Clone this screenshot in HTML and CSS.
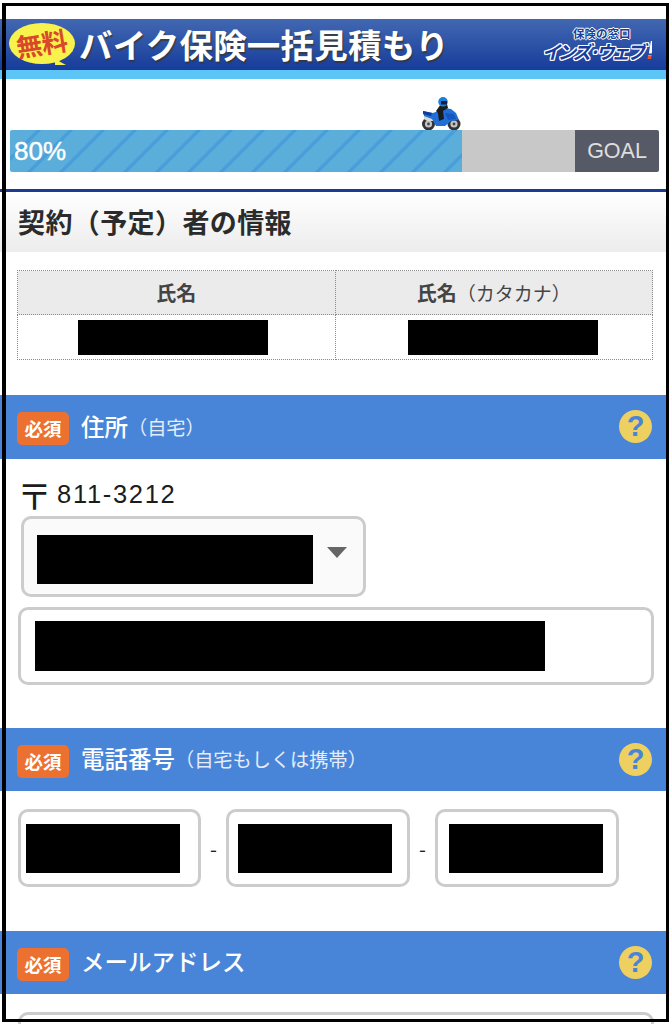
FILE: index.html
```html
<!DOCTYPE html>
<html lang="ja">
<head>
    <meta charset="UTF-8">
    <meta name="viewport" content="width=device-width, initial-scale=1.0">
    <title>バイク保険一括見積もり</title>
    <link rel="stylesheet" href="styles.css">
</head>
<body>
    <div class="page">
        <!-- Header -->
        <header class="site-header">
            <div class="free-bubble"><span>無料</span></div>
            <h1>バイク保険一括見積もり</h1>
            <div class="logo">
                <div class="logo-sub">保険の窓口</div>
                <div class="logo-main">インズ·ウェブ<span class="logo-mark">!</span></div>
            </div>
        </header>

        <!-- Progress -->
        <div class="progress">
            <div class="progress-bar">
                <div class="progress-fill">80%</div>
                <div class="progress-rest"></div>
                <div class="progress-goal">GOAL</div>
                <svg class="bike" width="40" height="33" viewBox="0 0 40 33">
                    <circle cx="7.500" cy="27" r="6.500" fill="#333"/>
                    <circle cx="7.500" cy="27" r="3.600" fill="#c4c4c4"/>
                    <circle cx="7.500" cy="27" r="1.400" fill="#444"/>
                    <circle cx="33" cy="27" r="6.500" fill="#333"/>
                    <circle cx="33" cy="27" r="3.600" fill="#c4c4c4"/>
                    <circle cx="33" cy="27" r="1.400" fill="#444"/>
                    <path d="M3 19l9 1 2 4-8 0-3-2z" fill="#d8d8d8"/>
                    <path d="M2 14l10 2 8-3 4-2 6 1 5 4 3 7-8 1-6 5h-9l-4-7-8-3z" fill="#1f6fd6"/>
                    <path d="M2 14l9 2-1 3-8-2z" fill="#0e3c9c"/>
                    <path d="M24 16l9 1 2 5-8 1z" fill="#1557c0"/>
                    <path d="M15 14l5-7h6l1 4-5 3 1 8-5 2-1-8z" fill="#1c1c1c"/>
                    <circle cx="22" cy="4.800" r="4.800" fill="#1c7fdc"/>
                    <path d="M20 4h6v3.500h-6z" fill="#14203a"/>
                </svg>
            </div>
        </div>

        <!-- Contract info -->
        <h2 class="section-title">契約（予定）者の情報</h2>
        <table class="name-table">
            <tr>
                <th>氏名</th>
                <th>氏名<small>（カタカナ）</small></th>
            </tr>
            <tr>
                <td><div class="mask mask-name mask-name-1"></div></td>
                <td><div class="mask mask-name mask-name-2"></div></td>
            </tr>
        </table>

        <!-- Address -->
        <div class="field-head">
            <span class="required">必須</span>
            <span class="field-name">住所</span>
            <span class="field-note">（自宅）</span>
            <span class="help">?</span>
        </div>
        <div class="field-body">
            <div class="postal"><span class="postal-mark">〒</span>811-3212</div>
            <div class="select-box">
                <div class="mask mask-pref"></div>
                <span class="select-arrow"></span>
            </div>
            <div class="text-box">
                <div class="mask mask-addr"></div>
            </div>
        </div>

        <!-- Phone -->
        <div class="field-head">
            <span class="required">必須</span>
            <span class="field-name">電話番号</span>
            <span class="field-note">（自宅もしくは携帯）</span>
            <span class="help">?</span>
        </div>
        <div class="field-body tel-row">
            <div class="tel-box tel-1"><div class="mask mask-tel"></div></div>
            <span class="tel-sep">-</span>
            <div class="tel-box tel-2"><div class="mask mask-tel"></div></div>
            <span class="tel-sep">-</span>
            <div class="tel-box tel-3"><div class="mask mask-tel"></div></div>
        </div>

        <!-- Mail -->
        <div class="field-head">
            <span class="required">必須</span>
            <span class="field-name">メールアドレス</span>
            <span class="help">?</span>
        </div>
        <div class="field-body">
            <div class="text-box mail-box"></div>
        </div>
    </div>

    <!-- Black frame round the screenshot -->
    <div class="frame"></div>
</body>
</html>
```
FILE: styles.css
```css
/* ===== BASE RESET ===== */
* {
    margin: 0;
    padding: 0;
    box-sizing: border-box;
}

html, body {
    width: 670px;
    height: 1024px;
    overflow: hidden;
    background: #fff;
    font-family: "Noto Sans CJK JP", "Noto Sans", sans-serif;
    color: #222;
}

.page {
    width: 666px;
    height: 1024px;
    padding-top: 19px;
    overflow: hidden;
}

.frame {
    position: absolute;
    left: 2px;
    top: 3px;
    width: 667px;
    height: 1019px;
    border: 3px solid #000;
    border-left-width: 4px;
}

/* ===== HEADER ===== */
.site-header {
    height: 60px;
    display: flex;
    align-items: center;
    padding: 0 6px 0 9px;
    background: linear-gradient(#4268b2, #173c9b);
    border-bottom: 9px solid #5cc5f6;
}

.free-bubble {
    position: relative;
    width: 66px;
    height: 41px;
    margin-top: -3px;
    display: flex;
    justify-content: center;
    align-items: center;
    background: #f8f24c;
    border-radius: 50%;
    flex-shrink: 0;
}

.free-bubble::after {
    content: "";
    position: absolute;
    right: 9px;
    bottom: -1px;
    border-top: 6px solid transparent;
    border-left: 11px solid #f8f24c;
}

.free-bubble span {
    font-size: 26px;
    line-height: 1;
    font-weight: 700;
    letter-spacing: -0.5px;
    color: #d9482a;
    transform: rotate(-9deg);
}

.site-header h1 {
    margin-left: 4px;
    margin-top: -2px;
    font-size: 33.500px;
    line-height: 1;
    font-weight: 700;
    letter-spacing: 0.2px;
    color: #fff;
    white-space: nowrap;
    text-shadow: 1px 2px 1px rgba(60, 50, 20, 0.65);
}

.logo {
    margin-left: auto;
    width: 118px;
    text-align: left;
    white-space: nowrap;
    flex-shrink: 0;
}

.logo-sub {
    margin-left: 31px;
    font-size: 11.500px;
    line-height: 11px;
    font-weight: 700;
    color: #1d3f94;
    text-shadow: -1px 0 #fff, 1px 0 #fff, 0 -1px #fff, 0 1px #fff;
}

.logo-main {
    margin-top: 1px;
    font-size: 18.500px;
    line-height: 21px;
    font-weight: 700;
    font-style: italic;
    letter-spacing: -3px;
    color: #173c9b;
    text-shadow: -1px 0 #fff, 1px 0 #fff, 0 -1px #fff, 0 1px #fff, -1px -1px #fff, 1px 1px #fff, 1px -1px #fff, -1px 1px #fff;
}

.logo-mark {
    margin-left: 4px;
    font-family: "Liberation Sans", Arial, sans-serif;
    font-size: 25px;
    line-height: 21px;
    color: transparent;
    text-shadow: none;
    background: linear-gradient(#fff 72%, #e8542a 72%);
    -webkit-background-clip: text;
    background-clip: text;
}

/* ===== PROGRESS ===== */
.progress {
    height: 113px;
    padding: 51px 7px 0 10px;
    border-bottom: 3px solid #1b3b93;
}

.progress-bar {
    position: relative;
    height: 42px;
    display: flex;
}

.progress-fill {
    width: 452px;
    padding-left: 4px;
    font-family: "Liberation Sans", Arial, sans-serif;
    font-size: 26px;
    line-height: 42px;
    color: #fff;
    -webkit-text-stroke: 0.4px #fff;
    border-radius: 2px 0 0 2px;
    background: repeating-linear-gradient(135deg, #5aaed9 0, #5aaed9 19px, #4a9fd8 19px, #4a9fd8 22.600px);
}

.progress-rest {
    width: 113px;
    background: #c8c8c8;
}

.progress-goal {
    width: 84px;
    text-align: center;
    font-family: "Liberation Sans", Arial, sans-serif;
    font-size: 21.500px;
    line-height: 42px;
    color: #dedede;
    background: #565a66;
    border-radius: 0 2px 2px 0;
}

.bike {
    position: absolute;
    left: 411px;
    top: -33px;
}

/* ===== SECTION TITLE ===== */
.section-title {
    height: 60px;
    padding-left: 18px;
    font-size: 27px;
    line-height: 60px;
    font-weight: 700;
    color: #2b2b2b;
    letter-spacing: 0.4px;
    background: linear-gradient(#fff, #ececec);
}

/* ===== NAME TABLE ===== */
.name-table {
    width: 636px;
    margin: 18px 0 35px 17px;
    border-collapse: collapse;
    table-layout: fixed;
}

.name-table th, .name-table td {
    border: 1px dotted #8a8a8a;
    text-align: center;
}

.name-table th {
    height: 44px;
    font-size: 20px;
    font-weight: 700;
    color: #444;
    background: #ebebeb;
}

.name-table th small {
    font-size: 19px;
    font-weight: 400;
}

.name-table td {
    height: 45px;
}

.mask {
    background: #000;
}

.mask-name {
    width: 190px;
    height: 35px;
}

.mask-name-1 {
    margin-left: 60px;
}

.mask-name-2 {
    margin-left: 72px;
}

.mask-pref {
    width: 276px;
    height: 49px;
    margin-top: 6px;
}

.mask-addr {
    width: 510px;
    height: 50px;
}

.mask-tel {
    width: 154px;
    height: 49px;
}

/* ===== FIELD HEADS ===== */
.field-head {
    height: 63.500px;
    display: flex;
    align-items: center;
    padding: 0 14px 0 17px;
    color: #fff;
    background: #4885d8;
}

.required {
    width: 52px;
    height: 33px;
    margin-top: 4px;
    border-radius: 5px;
    text-align: center;
    font-size: 18.500px;
    line-height: 33px;
    font-weight: 700;
    background: #ec7030;
}

.field-name {
    margin-left: 12px;
    margin-bottom: 2px;
    font-size: 23.500px;
    font-weight: 500;
}

.field-note {
    font-size: 19.200px;
    color: #e4edf9;
}

.help {
    width: 33px;
    height: 33px;
    margin-left: auto;
    border-radius: 50%;
    text-align: center;
    font-family: "Liberation Sans", Arial, sans-serif;
    font-size: 29px;
    line-height: 33px;
    font-weight: 700;
    color: #4885d8;
    background: #edd060;
}

/* ===== FIELD BODIES ===== */
.field-body {
    padding: 18px 12px 43px 18px;
}

.postal {
    display: flex;
    align-items: center;
    height: 39px;
    padding-bottom: 3px;
    font-family: "Liberation Sans", Arial, sans-serif;
    font-size: 25.500px;
    letter-spacing: 1.700px;
    color: #1c1c1c;
}

.postal-mark {
    margin-left: -1px;
    margin-right: 5px;
    font-family: "Noto Sans CJK JP", sans-serif;
    font-size: 35px;
    line-height: 36px;
    letter-spacing: 0;
}

.select-box {
    width: 345px;
    height: 81px;
    margin-left: 3px;
    padding-left: 13px;
    display: flex;
    align-items: center;
    background: #fafafa;
    border: 3px solid #ccc;
    border-radius: 10px;
}

.select-arrow {
    margin-left: 14px;
    margin-bottom: 7px;
    border-left: 10px solid transparent;
    border-right: 10px solid transparent;
    border-top: 11px solid #666;
}

.text-box {
    width: 636px;
    height: 78px;
    margin-top: 10px;
    padding-left: 14px;
    display: flex;
    align-items: center;
    background: #fff;
    border: 3px solid #ccc;
    border-radius: 10px;
}

.mail-box {
    margin-top: 0;
}

.tel-row {
    display: flex;
    align-items: center;
    padding-bottom: 43.500px;
}

.tel-box {
    height: 78px;
    display: flex;
    align-items: center;
    background: #fff;
    border: 3px solid #ccc;
    border-radius: 10px;
}

.tel-1 {
    width: 183px;
    padding-left: 5px;
}

.tel-2 {
    width: 184px;
    padding-left: 9px;
}

.tel-3 {
    width: 184px;
    padding-left: 11px;
}

.tel-sep {
    width: 25px;
    text-align: center;
    font-size: 20px;
    color: #222;
}
```
